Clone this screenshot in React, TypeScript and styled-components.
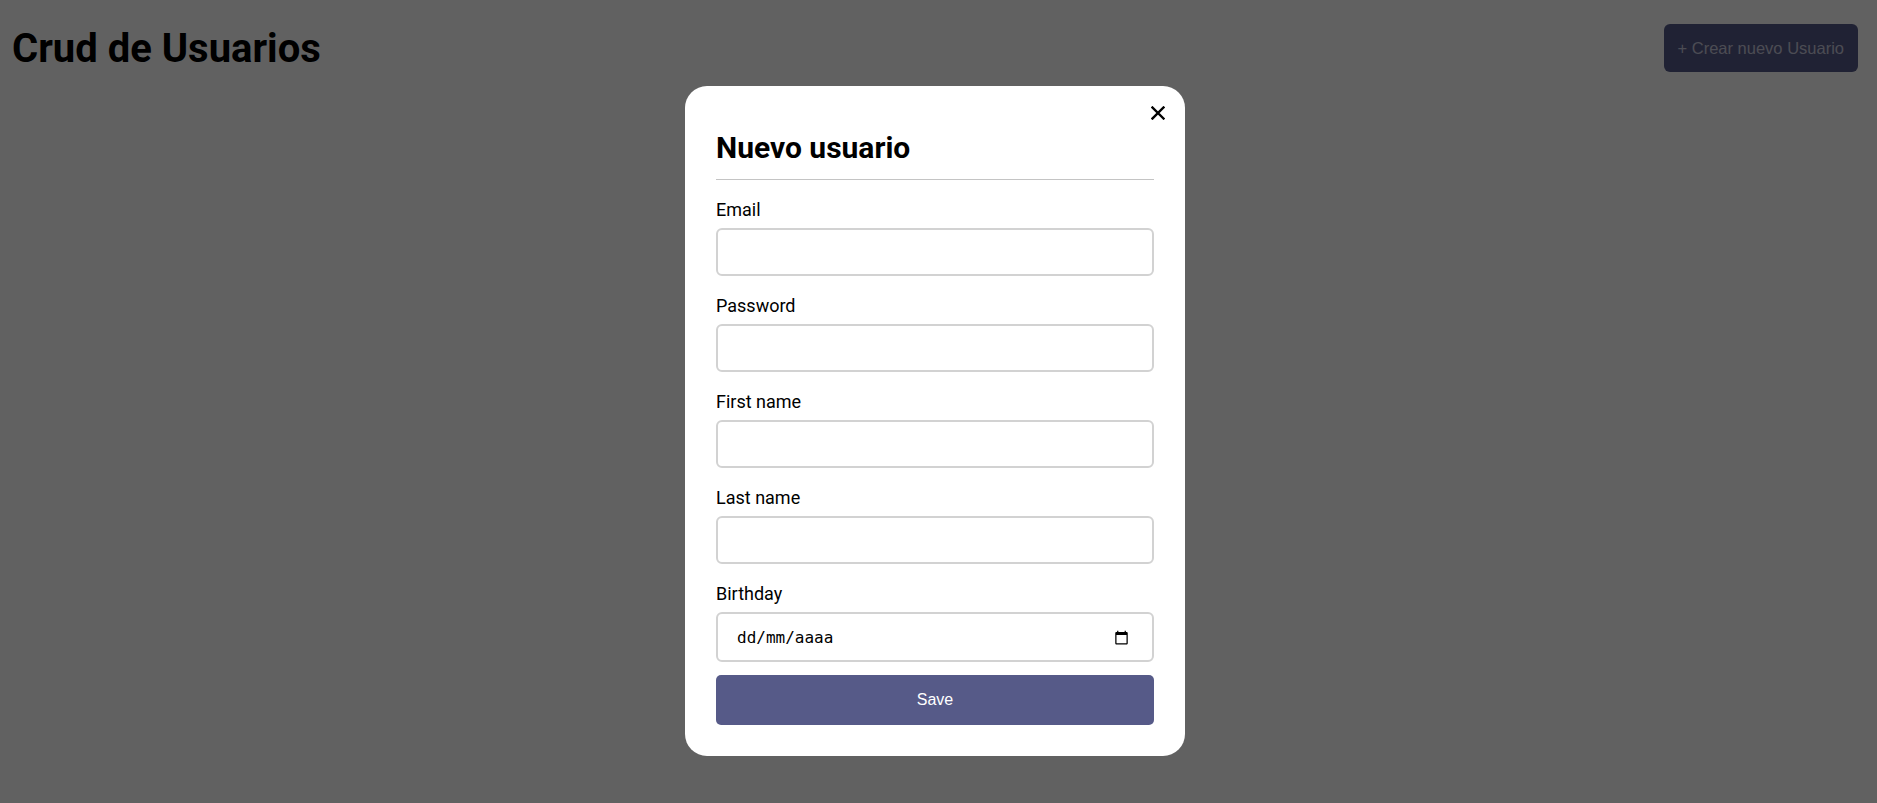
import React from "react";
import styled, { createGlobalStyle } from "styled-components";

const GlobalStyle = createGlobalStyle`
  html, body {
    margin: 0;
    padding: 0;
    background: #ffffff;
    font-family: Roboto, "Noto Sans", Arial, sans-serif;
  }
  * { box-sizing: border-box; }
`;

const Page = styled.div`
  min-height: 803px;
  background: #ffffff;
`;

const Header = styled.header`
  display: flex;
  justify-content: space-between;
  align-items: center;
  padding: 24px 19px 0 12px;
`;

const PageTitle = styled.h1`
  margin: 0;
  font-family: Roboto, sans-serif;
  font-size: 40px;
  font-weight: 700;
  line-height: 47px;
  color: #000000;
`;

const PrimaryButton = styled.button`
  height: 48px;
  padding: 0 14px;
  border: none;
  border-radius: 6px;
  background: #565a88;
  color: #c6c8dc;
  font-family: "Liberation Sans", Arial, sans-serif;
  font-size: 16.5px;
  cursor: pointer;
`;

const Overlay = styled.div`
  position: fixed;
  inset: 0;
  background: rgba(0, 0, 0, 0.62);
  display: flex;
  justify-content: center;
  align-items: flex-start;
  padding: 86px 7px 0 0;
`;

const Modal = styled.div`
  width: 500px;
  background: #ffffff;
  border-radius: 22px;
  padding: 20px 31px 31px;
  display: flex;
  flex-direction: column;
`;

const CloseRow = styled.div`
  display: flex;
  justify-content: flex-end;
  margin-right: -11px;
  height: 14px;
`;

const CloseButton = styled.button`
  width: 14px;
  height: 14px;
  padding: 0;
  border: none;
  background: transparent;
  display: flex;
  cursor: pointer;
`;

const ModalTitle = styled.h2`
  margin: 10px 0 0;
  font-family: Roboto, sans-serif;
  font-size: 30px;
  font-weight: 700;
  line-height: 35px;
  color: #000000;
`;

const Divider = styled.hr`
  margin: 14px 0 0;
  border: none;
  border-top: 1px solid #c4c4c4;
  height: 0;
`;

const Form = styled.form`
  display: flex;
  flex-direction: column;
  margin-top: 19px;
`;

const FieldList = styled.div`
  display: flex;
  flex-direction: column;
  gap: 19px;
`;

const Field = styled.div`
  display: flex;
  flex-direction: column;
  gap: 8px;
`;

const Label = styled.label`
  font-family: Roboto, sans-serif;
  font-size: 18px;
  font-weight: 400;
  line-height: 21px;
  color: #000000;
`;

const TextInput = styled.input`
  width: 100%;
  height: 48px;
  border: 2px solid #d2d2d2;
  border-radius: 6px;
  padding: 0 18px;
  font-family: Roboto, sans-serif;
  font-size: 16px;
  outline: none;
  background: #ffffff;
`;

const DateBox = styled.div`
  display: flex;
  align-items: center;
  height: 50px;
  border: 2px solid #d2d2d2;
  border-radius: 6px;
  padding: 0 23px 0 19px;
  background: #ffffff;
`;

const DateText = styled.input`
  flex: 1;
  border: none;
  outline: none;
  padding: 0;
  font-family: "DejaVu Sans Mono", "Liberation Mono", monospace;
  font-size: 16px;
  color: #000000;
  background: transparent;
  &::placeholder {
    color: #000000;
    opacity: 1;
  }
`;

const CalendarIcon = styled.svg`
  width: 15px;
  height: 15px;
  flex-shrink: 0;
`;

const SaveButton = styled.button`
  margin-top: 13px;
  height: 50px;
  border: none;
  border-radius: 5px;
  background: #565a88;
  color: #ffffff;
  font-family: "Liberation Sans", Arial, sans-serif;
  font-size: 16px;
  cursor: pointer;
`;

const fields = [
  { id: "email", label: "Email", type: "email" },
  { id: "password", label: "Password", type: "password" },
  { id: "first", label: "First name", type: "text" },
  { id: "last", label: "Last name", type: "text" },
];

export default function App() {
  return (
    <Page>
      <GlobalStyle />
      <Header>
        <PageTitle>Crud de Usuarios</PageTitle>
        <PrimaryButton>+ Crear nuevo Usuario</PrimaryButton>
      </Header>
      <Overlay>
        <Modal>
          <CloseRow>
            <CloseButton aria-label="Cerrar">
              <svg width="14" height="14" viewBox="0 0 14 14">
                <path d="M1.5 1.5 L12.5 12.5 M12.5 1.5 L1.5 12.5" stroke="#000" strokeWidth="2.4" strokeLinecap="square" />
              </svg>
            </CloseButton>
          </CloseRow>
          <ModalTitle>Nuevo usuario</ModalTitle>
          <Divider />
          <Form onSubmit={(e) => e.preventDefault()}>
            <FieldList>
              {fields.map((f) => (
                <Field key={f.id}>
                  <Label htmlFor={f.id}>{f.label}</Label>
                  <TextInput id={f.id} type={f.type} />
                </Field>
              ))}
              <Field>
                <Label htmlFor="birthday">Birthday</Label>
                <DateBox>
                  <DateText id="birthday" type="text" placeholder="dd/mm/aaaa" />
                  <CalendarIcon viewBox="0 0 24 24">
                    <path
                      fill="#000"
                      d="M20 3h-1V1h-2v2H7V1H5v2H4c-1.1 0-2 .9-2 2v16c0 1.1.9 2 2 2h16c1.1 0 2-.9 2-2V5c0-1.1-.9-2-2-2zm0 18H4V8h16v13z"
                    />
                  </CalendarIcon>
                </DateBox>
              </Field>
            </FieldList>
            <SaveButton type="submit">Save</SaveButton>
          </Form>
        </Modal>
      </Overlay>
    </Page>
  );
}
